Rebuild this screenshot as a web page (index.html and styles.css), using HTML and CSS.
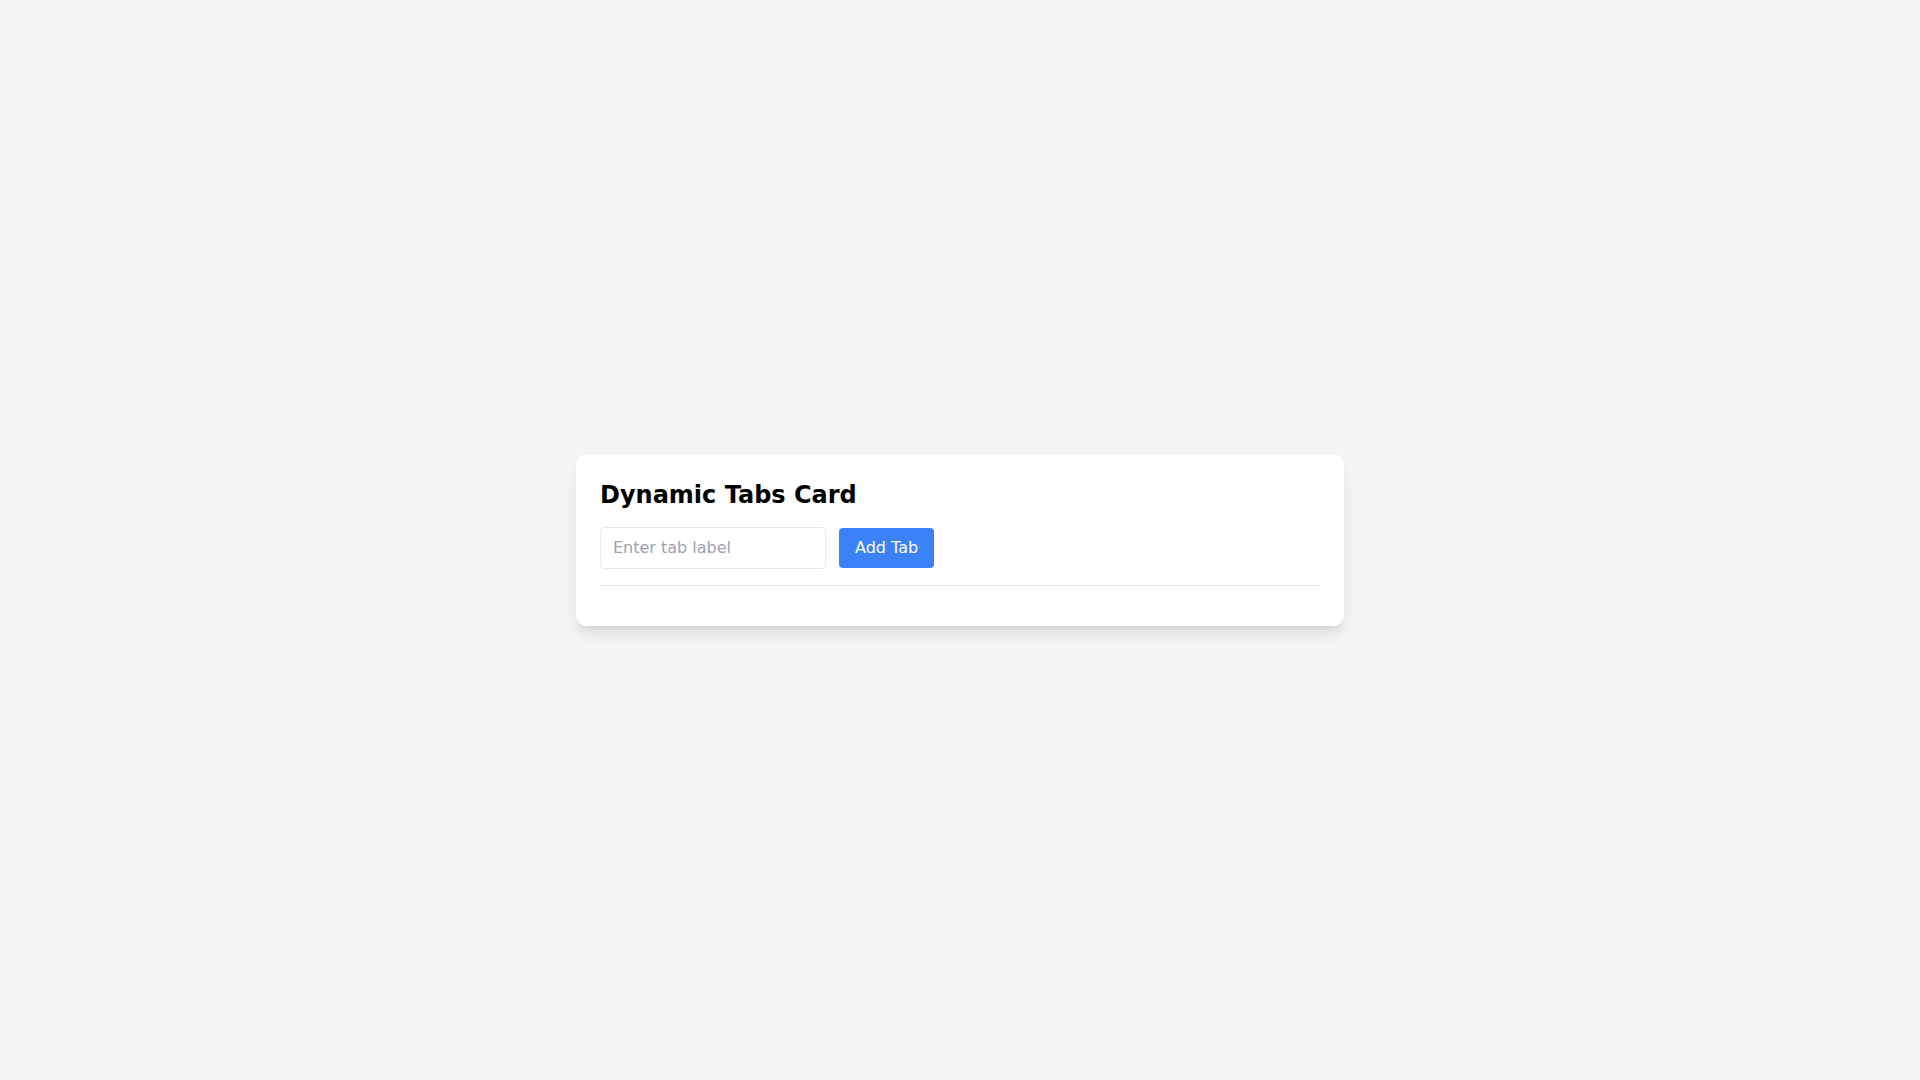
FILE: index.html
```html
<!DOCTYPE html>
<html lang="en">
<head>
    <meta charset="UTF-8">
    <meta name="viewport" content="width=device-width, initial-scale=1.0">
    <title>Dynamic Tabs Card</title>
    <link rel="stylesheet" href="styles.css">
</head>
<body>
    <div class="page">
        <div class="card">
            <h1>Dynamic Tabs Card</h1>

            <div class="add-row">
                <input type="text" id="tab-label" placeholder="Enter tab label">
                <button class="btn" id="addBtn">Add Tab</button>
            </div>

            <div class="tab-list" id="tab-list">
                <!-- Las pestañas aparecerán aquí -->
            </div>

            <div class="tab-content" id="tab-content"></div>
        </div>
    </div>
</body>
</html>
```

FILE: styles.css
```css
body {
    font-family: "DejaVu Sans", sans-serif;
    background-color: #f3f4f6;
    color: black;
    margin: 0;
    padding: 0;
}

.page {
    min-height: 100vh;
    display: flex;
    align-items: center;
    justify-content: center;
}

.card {
    width: 768px;
    box-sizing: border-box;
    padding: 24px;
    background-color: white;
    border-radius: 10px;
    box-shadow: 0 10px 15px -3px rgba(0, 0, 0, 0.1), 0 4px 6px -4px rgba(0, 0, 0, 0.1);
}

h1 {
    margin: 0 0 16px 0;
    font-size: 24px;
    line-height: 32px;
    font-weight: bold;
}

.add-row {
    display: flex;
    align-items: center;
    gap: 13px;
    margin-bottom: 16px;
}

input[type="text"] {
    width: 226px;
    box-sizing: border-box;
    padding: 8px 12px;
    border: 1px solid #e5e7eb;
    border-radius: 4px;
    font-family: inherit;
    font-size: 16px;
    line-height: 24px;
    color: black;
}

input::placeholder {
    color: #9ca3af;
}

input:focus {
    outline: none;
    border-color: #3b82f6;
}

.btn {
    padding: 8px 16px;
    border: none;
    border-radius: 4px;
    background-color: #3b82f6; /* Azul */
    color: white;
    font-family: inherit;
    font-size: 16px;
    line-height: 24px;
    cursor: pointer;
}

.btn:hover {
    background-color: #2563eb;
}

.tab-list {
    border-bottom: 1px solid #e5e7eb;
    margin-bottom: 16px;
}
```
